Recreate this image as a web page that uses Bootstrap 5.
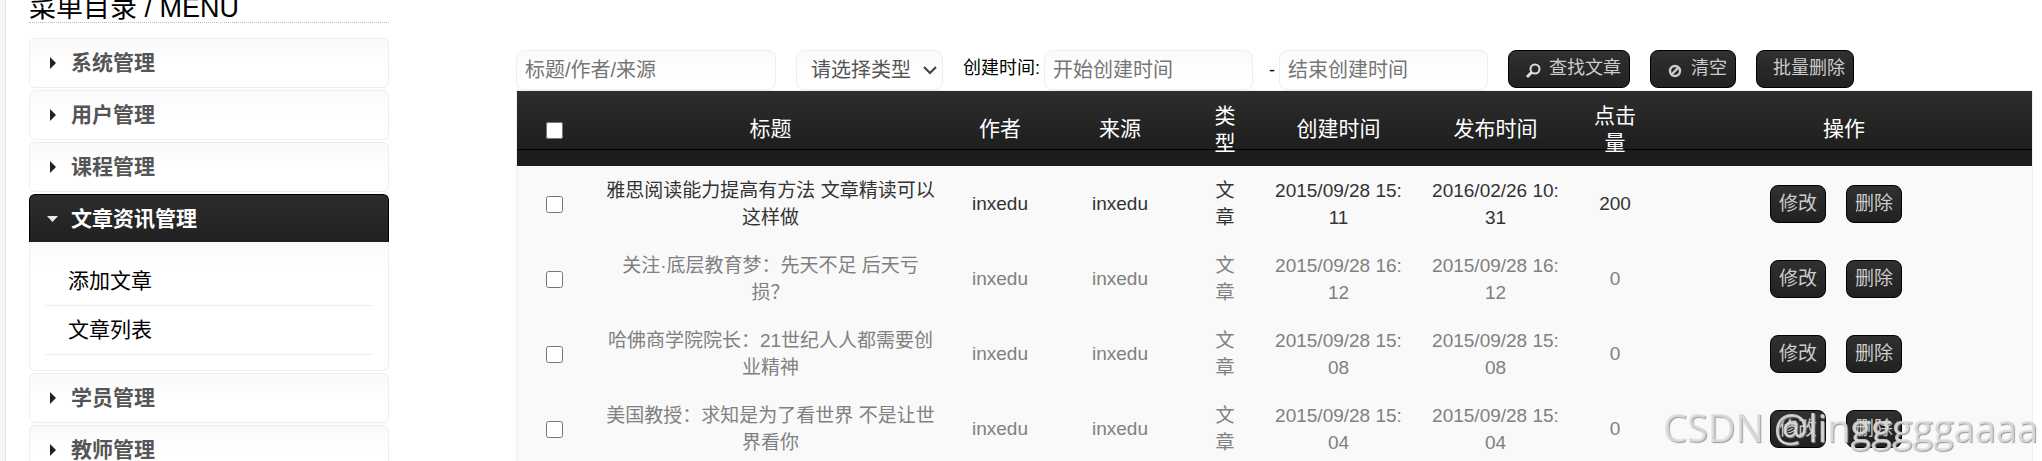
<!DOCTYPE html>
<html lang="zh-CN">
<head>
<meta charset="utf-8">
<meta name="viewport" content="width=device-width, initial-scale=1">
<title>文章列表</title>
<link href="https://cdn.jsdelivr.net/npm/bootstrap@5.3.0/dist/css/bootstrap.min.css" rel="stylesheet">
<style>
  body { font-family: "Liberation Sans", "Noto Sans CJK SC", sans-serif; color: #000; background: #fff; overflow: hidden; }
  .edge { width: 6px; background: #f6f6f6; border-right: 1px solid #e2e2e2; }
  .side { width: 360px; margin-left: 23px; }
  .side-title { font-size: 27px; line-height: 16px; padding-bottom: 6px; margin-bottom: 15px; border-bottom: 1px dotted #bbb; font-weight: 400; white-space: nowrap; }
  .soft { border: 1px solid #eee; background: linear-gradient(#f9f9f9, #fff 24px); }
  .menu-head { display: flex; align-items: center; height: 50px; margin-bottom: 2px; padding: 0 0 0 17px; border-radius: 6px; font-size: 21px; font-weight: 700; color: #555; text-decoration: none; }
  .menu-head svg { width: 12px; height: 12px; margin-right: 12px; }
  .menu-head.open { height: 48px; margin-bottom: 0; border: 1px solid #000; border-bottom: 0; border-radius: 6px 6px 0 0; color: #fff; background: linear-gradient(#2d2d2d, #202020); }
  .menu-body { padding: 15px; margin-bottom: 2px; border-top: 0; border-radius: 0 0 6px 6px; }
  .menu-body a { display: block; height: 49px; line-height: 47px; padding-left: 23px; border-bottom: 1px solid #eee; font-size: 21px; color: #000; text-decoration: none; }
  .main { margin: 50px 9px 0 127px; }
  .tools { height: 40px; font-size: 20px; }
  .field { height: 40px; padding: 0 8px; border-radius: 8px; font-size: 20px; color: #555; }
  .field::placeholder { color: #757575; opacity: 1; }
  .keyword { width: 260px; }
  .date { width: 209px; }
  .kind { width: 147px; padding: 0 14px; appearance: none; background: url("data:image/svg+xml,%3Csvg xmlns='http://www.w3.org/2000/svg' viewBox='0 0 14 10'%3E%3Cpath d='M1 2l6 6 6-6' fill='none' stroke='%23444' stroke-width='2.2'/%3E%3C/svg%3E") right 5px center / 14px 10px no-repeat, linear-gradient(#f9f9f9, #fff 24px); }
  .tools label { font-size: 18px; white-space: nowrap; }
  .range { gap: 16px; }
  .dark { height: 38px; border: 1px solid #000; border-radius: 8px; background: linear-gradient(#303030, #212121); color: #ccc; font-size: 18px; line-height: 34px; padding: 0 8px 2px 16px; white-space: nowrap; display: flex; align-items: center; }
  .dark svg { width: 16px; height: 16px; margin: 5px 8px 0 0; }
  .dark.act { padding: 0 8px; font-size: 19px; }
  .list { table-layout: fixed; width: 100%; border: 1px solid #eee; border-collapse: separate; border-spacing: 0; background: #f9f9f9; text-align: center; font-size: 19px; line-height: 27px; color: #808080; word-break: break-all; }
  .list th { height: 75px; padding: 0 10px; font-size: 21px; font-weight: 400; color: #fff; background: linear-gradient(#2d2d2d, #1e1e1e 58px, #000 58px, #000 59px, #1c1c1c 59px); }
  .list td { height: 75px; padding: 0 10px; }
  .list .wide { padding: 0 14px; }
  .list .slim { padding: 0 20px; }
  .list .current { color: #333; }
  .list input { width: 17px; height: 17px; margin: 0; vertical-align: middle; }
  .c-pick { width: 74px; } .c-title { width: 359px; } .c-author { width: 100px; } .c-source { width: 140px; }
  .c-kind { width: 70px; } .c-date { width: 157px; } .c-hits { width: 82px; }
  .gap-tools { gap: 20px; }
  .stamp { position: fixed; right: 4px; bottom: 8px; font-family: "Open Sans", sans-serif; font-size: 38px; line-height: 52px; color: rgba(225,225,225,.85); text-shadow: 1px 1px 1px #999; pointer-events: none; white-space: nowrap; }
</style>
</head>
<body>
<div class="d-flex vh-100">
  <div class="edge flex-shrink-0"></div>
  <nav class="side flex-shrink-0">
    <h1 class="side-title">菜单目录 / MENU</h1>
    <a class="menu-head soft" href="#"><svg viewBox="0 0 12 12"><path d="M3 0l6 6-6 6z" fill="#222"/></svg>系统管理</a>
    <a class="menu-head soft" href="#"><svg viewBox="0 0 12 12"><path d="M3 0l6 6-6 6z" fill="#222"/></svg>用户管理</a>
    <a class="menu-head soft" href="#"><svg viewBox="0 0 12 12"><path d="M3 0l6 6-6 6z" fill="#222"/></svg>课程管理</a>
    <a class="menu-head open" href="#"><svg viewBox="0 0 12 12"><path d="M0 3h11l-5.500 6z" fill="#e8e8e8"/></svg>文章资讯管理</a>
    <div class="menu-body soft"><a href="#">添加文章</a><a href="#">文章列表</a></div>
    <a class="menu-head soft" href="#"><svg viewBox="0 0 12 12"><path d="M3 0l6 6-6 6z" fill="#222"/></svg>学员管理</a>
    <a class="menu-head soft" href="#"><svg viewBox="0 0 12 12"><path d="M3 0l6 6-6 6z" fill="#222"/></svg>教师管理</a>
  </nav>
  <main class="main flex-grow-1">
    <form class="tools d-flex gap-tools">
      <input class="field soft keyword" type="text" placeholder="标题/作者/来源" aria-label="标题/作者/来源">
      <select class="field soft kind" aria-label="类型"><option>请选择类型</option><option>文章</option></select>
      <div class="d-flex range">
        <div class="d-flex align-items-center">
          <label class="me-1 pb-1" for="from">创建时间:</label>
          <input class="field soft date" id="from" type="text" placeholder="开始创建时间">
        </div>
        <div class="d-flex align-items-center">
          <label class="me-1" for="to">-</label>
          <input class="field soft date" id="to" type="text" placeholder="结束创建时间">
        </div>
      </div>
      <button class="dark" type="button"><svg viewBox="0 0 16 16"><circle cx="10" cy="6" r="4.500" fill="none" stroke="#ddd" stroke-width="2"/><path d="M6.500 9.500L2 14" stroke="#ddd" stroke-width="3"/></svg>查找文章</button>
      <button class="dark" type="button"><svg viewBox="0 0 16 16"><circle cx="8" cy="8" r="5" fill="none" stroke="#ccc" stroke-width="2.400"/><path d="M4.500 11.500l7-7" stroke="#ccc" stroke-width="2.400"/></svg>清空</button>
      <button class="dark" type="button">批量删除</button>
    </form>
    <table class="list">
      <colgroup><col class="c-pick"><col class="c-title"><col class="c-author"><col class="c-source"><col class="c-kind"><col class="c-date"><col class="c-date"><col class="c-hits"><col></colgroup>
      <thead><tr><th><input type="checkbox" aria-label="全选"></th><th>标题</th><th>作者</th><th>来源</th><th class="slim">类型</th><th>创建时间</th><th>发布时间</th><th>点击量</th><th>操作</th></tr></thead>
      <tbody>
        <tr class="current"><td><input type="checkbox" aria-label="选择"></td><td class="wide">雅思阅读能力提高有方法 文章精读可以这样做</td><td>inxedu</td><td>inxedu</td><td class="slim">文章</td><td>2015/09/28 15:11</td><td>2016/02/26 10:31</td><td>200</td><td><div class="d-flex justify-content-center gap-tools pe-3"><button class="dark act" type="button">修改</button><button class="dark act" type="button">删除</button></div></td></tr>
        <tr><td><input type="checkbox" aria-label="选择"></td><td class="wide">关注·底层教育梦：先天不足 后天亏损？</td><td>inxedu</td><td>inxedu</td><td class="slim">文章</td><td>2015/09/28 16:12</td><td>2015/09/28 16:12</td><td>0</td><td><div class="d-flex justify-content-center gap-tools pe-3"><button class="dark act" type="button">修改</button><button class="dark act" type="button">删除</button></div></td></tr>
        <tr><td><input type="checkbox" aria-label="选择"></td><td class="wide">哈佛商学院院长：21世纪人人都需要创业精神</td><td>inxedu</td><td>inxedu</td><td class="slim">文章</td><td>2015/09/28 15:08</td><td>2015/09/28 15:08</td><td>0</td><td><div class="d-flex justify-content-center gap-tools pe-3"><button class="dark act" type="button">修改</button><button class="dark act" type="button">删除</button></div></td></tr>
        <tr><td><input type="checkbox" aria-label="选择"></td><td class="wide">美国教授：求知是为了看世界 不是让世界看你</td><td>inxedu</td><td>inxedu</td><td class="slim">文章</td><td>2015/09/28 15:04</td><td>2015/09/28 15:04</td><td>0</td><td><div class="d-flex justify-content-center gap-tools pe-3"><button class="dark act" type="button">修改</button><button class="dark act" type="button">删除</button></div></td></tr>
      </tbody>
    </table>
  </main>
</div>
<div class="stamp">CSDN @lingggggaaaa</div>
<script src="https://cdn.jsdelivr.net/npm/bootstrap@5.3.0/dist/js/bootstrap.bundle.min.js"></script>
</body>
</html>
